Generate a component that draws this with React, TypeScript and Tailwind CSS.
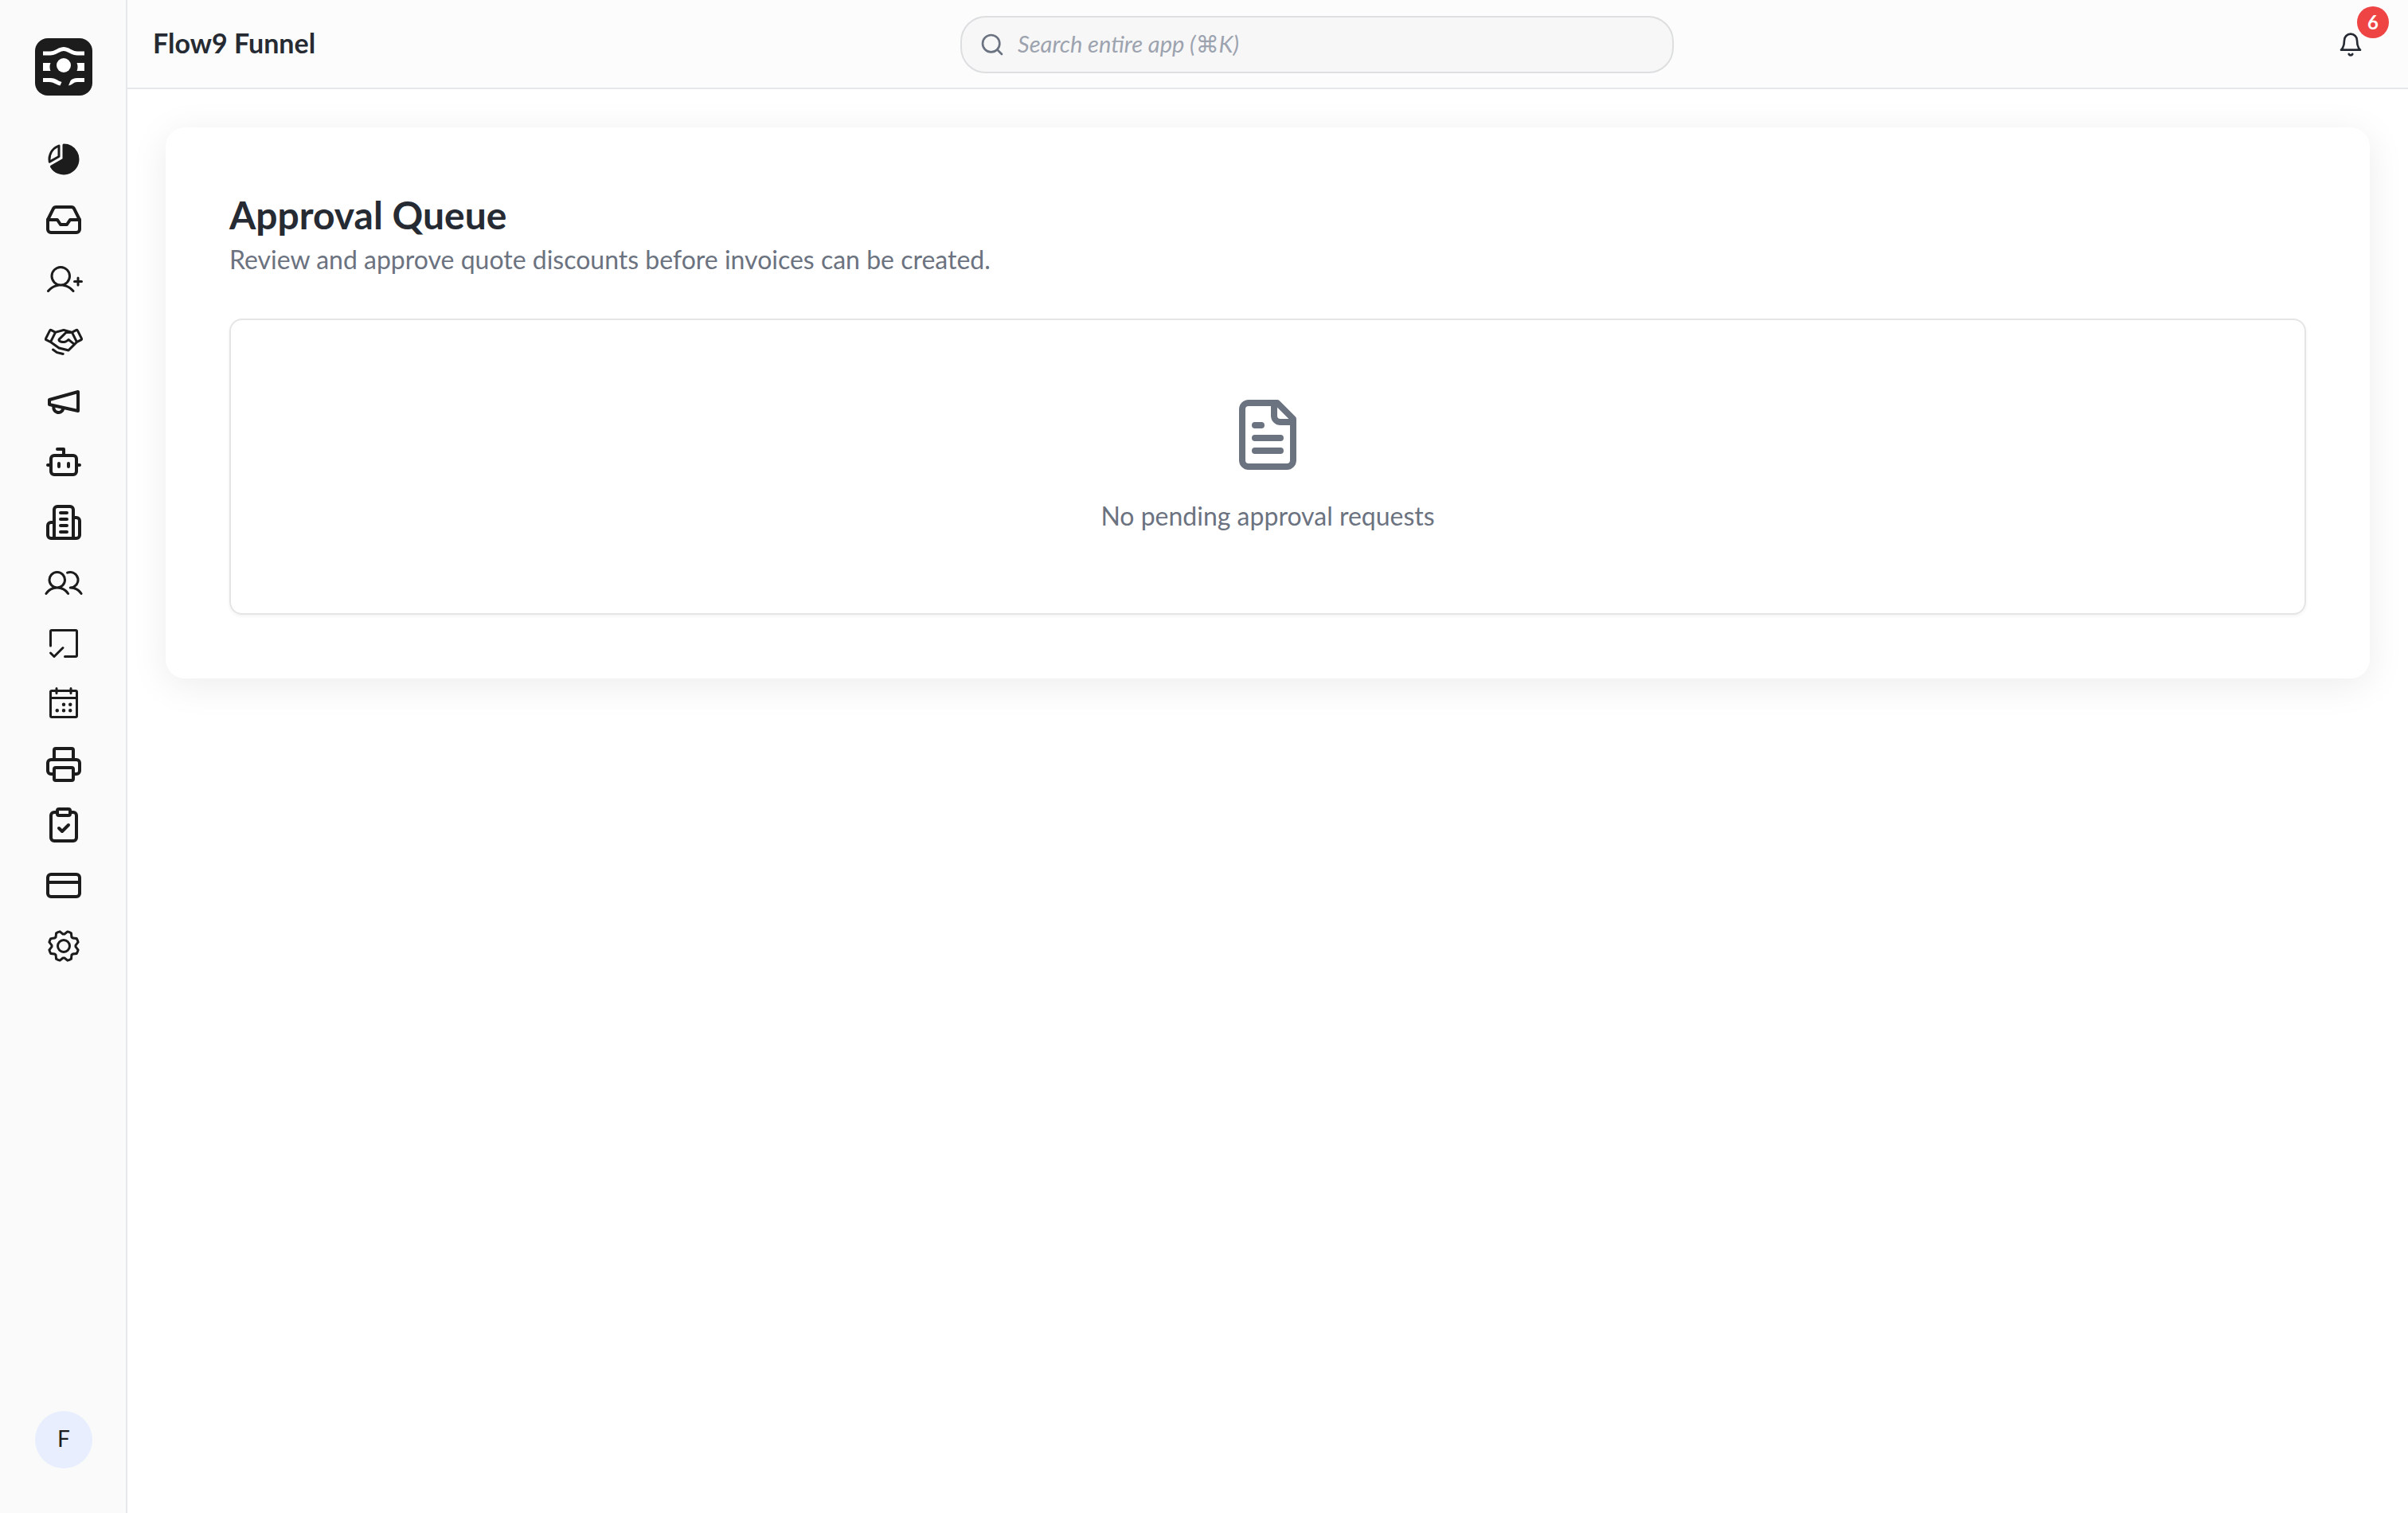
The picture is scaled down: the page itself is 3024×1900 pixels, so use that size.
import type { ReactNode } from "react";
import {
  PiCalendarDots,
  PiChartPieSliceFill,
  PiGear,
  PiHandshake,
  PiUserPlus,
  PiUsers,
} from "react-icons/pi";

interface NavItem {
  id: string;
  label: string;
  icon: ReactNode;
}

function LineIcon({ size = 48, children }: { size?: number; children: ReactNode }) {
  return (
    <svg
      width={size}
      height={size}
      viewBox="0 0 24 24"
      fill="none"
      stroke="currentColor"
      strokeWidth="2"
      strokeLinecap="round"
      strokeLinejoin="round"
      aria-hidden="true"
    >
      {children}
    </svg>
  );
}

function TaskIcon() {
  return (
    <svg
      width="48"
      height="48"
      viewBox="0 0 48 48"
      fill="none"
      stroke="currentColor"
      strokeWidth="3"
      strokeLinecap="round"
      strokeLinejoin="round"
      aria-hidden="true"
    >
      <path d="M7.5 27V9A1.5 1.5 0 0 1 9 7.5h30A1.5 1.5 0 0 1 40.5 9v30a1.5 1.5 0 0 1-1.5 1.5H25.5" />
      <path d="m7.5 36 4.5 4.5 11-11" />
    </svg>
  );
}

function Logo() {
  return (
    <svg width="72" height="72" viewBox="0 0 72 72" aria-hidden="true">
      <rect width="72" height="72" rx="16" fill="#1c1c1c" />
      <path
        d="M10 19h9c7 0 11-5.5 17-5.5S46 19 53 19h9"
        fill="none"
        stroke="#fff"
        strokeWidth="5"
      />
      <path d="M10 31h9.500q-2 5 0 10H10zM62 31h-9.500q2 5 0 10H62z" fill="#fff" />
      <circle cx="36" cy="34" r="9" fill="#fff" />
      <path d="M10 50h10c5 0 8 3 13.500 5l-2 4.500C26 58 23 55 18 55h-8z" fill="#fff" />
      <path d="M62 50h-9c-4 0-7 1.500-8.500 3.500L42 59.500c5-1 6-4.500 11-4.500h9z" fill="#fff" />
    </svg>
  );
}

const NAV: NavItem[] = [
  { id: "dashboard", label: "Dashboard", icon: <PiChartPieSliceFill size={48} /> },
  {
    id: "inbox",
    label: "Inbox",
    icon: (
      <LineIcon>
        <path d="M22 12h-6l-2 3h-4l-2-3H2" />
        <path d="M5.450 5.110 2 12v6a2 2 0 0 0 2 2h16a2 2 0 0 0 2-2v-6l-3.450-6.890A2 2 0 0 0 16.760 4H7.240a2 2 0 0 0-1.790 1.110z" />
      </LineIcon>
    ),
  },
  { id: "leads", label: "Leads", icon: <PiUserPlus size={48} /> },
  { id: "deals", label: "Deals", icon: <PiHandshake size={48} /> },
  {
    id: "campaigns",
    label: "Campaigns",
    icon: (
      <LineIcon>
        <path d="m3 11 18-5v12L3 14v-3z" />
        <path d="M11.6 16.8a3 3 0 1 1-5.8-1.6" />
      </LineIcon>
    ),
  },
  {
    id: "assistant",
    label: "Assistant",
    icon: (
      <LineIcon>
        <path d="M12 8V4H8" />
        <rect width="16" height="12" x="4" y="8" rx="2" />
        <path d="M2 14h2M20 14h2M15 13v2M9 13v2" />
      </LineIcon>
    ),
  },
  {
    id: "companies",
    label: "Companies",
    icon: (
      <LineIcon>
        <path d="M6 22V4a2 2 0 0 1 2-2h8a2 2 0 0 1 2 2v18Z" />
        <path d="M6 12H4a2 2 0 0 0-2 2v6a2 2 0 0 0 2 2h2" />
        <path d="M18 9h2a2 2 0 0 1 2 2v9a2 2 0 0 1-2 2h-2" />
        <path d="M10 6h4M10 10h4M10 14h4M10 18h4" />
      </LineIcon>
    ),
  },
  { id: "contacts", label: "Contacts", icon: <PiUsers size={48} /> },
  { id: "tasks", label: "Tasks", icon: <TaskIcon /> },
  { id: "calendar", label: "Calendar", icon: <PiCalendarDots size={48} /> },
  {
    id: "print",
    label: "Print",
    icon: (
      <LineIcon>
        <path d="M6 18H4a2 2 0 0 1-2-2v-5a2 2 0 0 1 2-2h16a2 2 0 0 1 2 2v5a2 2 0 0 1-2 2h-2" />
        <path d="M6 9V3a1 1 0 0 1 1-1h10a1 1 0 0 1 1 1v6" />
        <rect x="6" y="14" width="12" height="8" rx="1" />
      </LineIcon>
    ),
  },
  {
    id: "approvals",
    label: "Approvals",
    icon: (
      <LineIcon>
        <rect width="8" height="4" x="8" y="2" rx="1" />
        <path d="M16 4h2a2 2 0 0 1 2 2v14a2 2 0 0 1-2 2H6a2 2 0 0 1-2-2V6a2 2 0 0 1 2-2h2" />
        <path d="m9 14 2 2 4-4" />
      </LineIcon>
    ),
  },
  {
    id: "billing",
    label: "Billing",
    icon: (
      <LineIcon>
        <rect width="20" height="14" x="2" y="5" rx="2" />
        <path d="M2 10h20" />
      </LineIcon>
    ),
  },
  { id: "settings", label: "Settings", icon: <PiGear size={48} /> },
];

function Sidebar() {
  return (
    <aside className="flex w-40 shrink-0 flex-col items-center border-r-2 border-[#e5e7eb] bg-[#fafafa] pt-12 pb-14 pl-0.5">
      <a href="#home" aria-label="Home">
        <Logo />
      </a>
      <nav className="mt-14 flex flex-col gap-7 text-[#1c1c1c]">
        {NAV.map((item) => (
          <a key={item.id} href={`#${item.id}`} aria-label={item.label}>
            {item.icon}
          </a>
        ))}
      </nav>
      <button
        type="button"
        aria-label="Account"
        className="mt-auto flex size-18 items-center justify-center rounded-full bg-[#e8eefd] pb-1 text-[28px] leading-10 text-[#1c1c1c]"
      >
        F
      </button>
    </aside>
  );
}

function Header() {
  return (
    <header className="flex h-28 items-center justify-between border-b-2 border-[#e5e7eb] bg-[#fcfcfc] px-8 pt-0.5">
      <p className="pb-1 text-[34px] leading-14 font-bold">Flow9 Funnel</p>
      <label className="flex h-18 w-[896px] items-center gap-4 rounded-[32px] border-2 border-[#dcdedf] bg-[#f7f7f7] px-[22px] text-[#6b7280]">
        <LineIcon size={32}>
          <circle cx="11" cy="11" r="8" />
          <path d="m21 21-4.3-4.3" />
        </LineIcon>
        <input
          type="search"
          aria-label="Search entire app"
          placeholder="Search entire app (⌘K)"
          className="h-full flex-1 bg-transparent pb-1 text-[29px] outline-none placeholder:text-[#9ca3af] placeholder:italic"
        />
      </label>
      <button
        type="button"
        aria-label="Notifications, 6 unread"
        className="relative flex size-20 items-center justify-center"
      >
        <LineIcon size={32}>
          <path d="M6 8a6 6 0 0 1 12 0c0 7 3 9 3 9H3s3-2 3-9" />
          <path d="M10.3 21a1.94 1.94 0 0 0 3.4 0" />
        </LineIcon>
        <span className="absolute -top-2 -right-2 flex size-10 items-center justify-center rounded-full bg-[#ef4444] text-2xl font-bold text-white">
          6
        </span>
      </button>
    </header>
  );
}

export default function App() {
  return (
    <div className="flex min-h-screen bg-white font-[Lato,'DejaVu_Sans',sans-serif] text-[#262b33]">
      <Sidebar />
      <div className="flex min-w-0 flex-1 flex-col">
        <Header />
        <main className="p-12">
          <section className="rounded-3xl bg-white px-20 pt-[78px] pb-20 shadow-[0_8px_48px_rgba(0,0,0,0.08)]">
            <h1 className="text-5xl leading-16 font-bold">Approval Queue</h1>
            <p className="text-[32px] leading-12 text-[#6b7280]">
              Review and approve quote discounts before invoices can be created.
            </p>
            <div className="mt-[50px] flex flex-col items-center rounded-2xl border-2 border-[#e5e5e5] pt-24 pb-[98px] text-[#6b7280] shadow-[0_2px_4px_rgba(0,0,0,0.05)]">
              <LineIcon size={96}>
                <path d="M15 2H6a2 2 0 0 0-2 2v16a2 2 0 0 0 2 2h12a2 2 0 0 0 2-2V7Z" />
                <path d="M14 2v4a2 2 0 0 0 2 2h4" />
                <path d="M10 9H8M16 13H8M16 17H8" />
              </LineIcon>
              <p className="mt-[30px] text-[32px] leading-12">No pending approval requests</p>
            </div>
          </section>
        </main>
      </div>
    </div>
  );
}
